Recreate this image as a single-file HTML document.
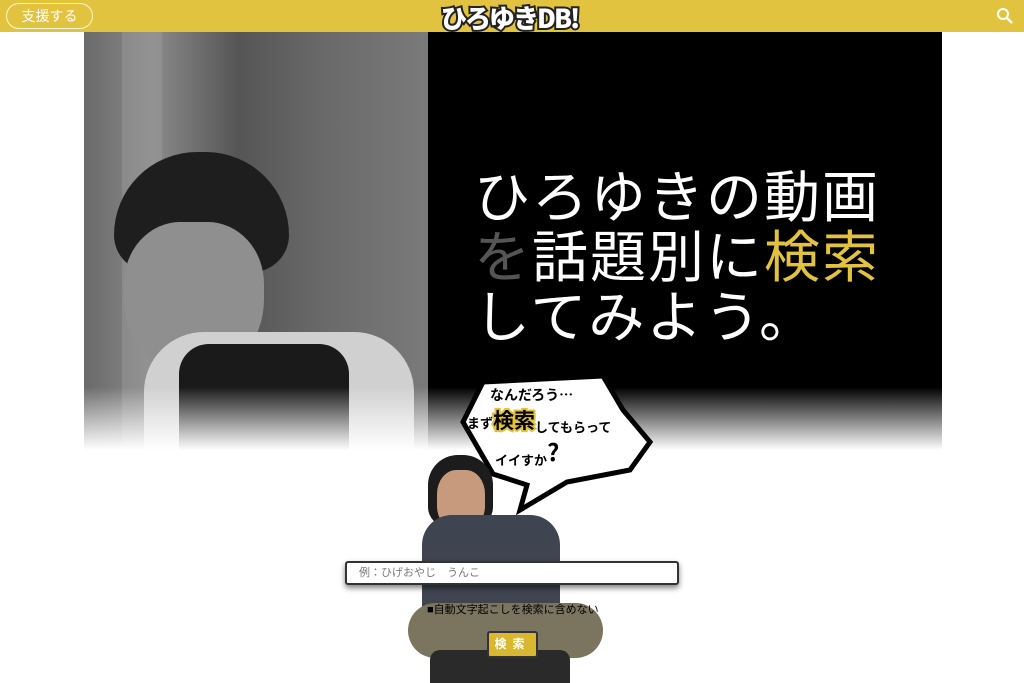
<!DOCTYPE html>
<html><head><meta charset="utf-8"><style>
*{margin:0;padding:0;box-sizing:border-box}
body{width:1024px;height:683px;overflow:hidden;background:#fff;font-family:"Liberation Sans","Noto Sans CJK JP",sans-serif;position:relative}
.hdr{position:absolute;left:0;top:0;width:1024px;height:32px;background:#e1c33f}
.sup{position:absolute;left:6px;top:3px;width:87px;height:26px;border:1px solid #fff5cc;border-radius:13px;color:#fff;font-size:14px;text-align:center;line-height:24px}
.logo{position:absolute;left:441px;top:-1px;font-size:26px;font-weight:900;color:#fff;-webkit-text-stroke:4px #222;paint-order:stroke;letter-spacing:-2px;font-family:"Noto Sans CJK JP",sans-serif}
.hero{position:absolute;left:84px;top:32px;width:858px;height:418px;overflow:hidden}
.lp{position:absolute;left:0;top:0;width:344px;height:418px;background:linear-gradient(90deg,#6a6a6a,#8a8a8a 20%,#555 45%,#6a6a6a 70%,#7a7a7a)}
.rp{position:absolute;left:344px;top:0;width:514px;height:418px;background:#000}
.fade{position:absolute;left:0;top:355px;width:858px;height:63px;background:linear-gradient(rgba(255,255,255,0),#fff)}
.h1{position:absolute;left:474px;top:164px;font-size:56px;line-height:60px;color:#fff;letter-spacing:2px;font-family:"Noto Sans CJK JP",sans-serif;font-weight:400}
.g{color:#555}.y{color:#e1c33f}
.bub{position:absolute;left:455px;top:370px}
.inp{position:absolute;left:345px;top:561px;width:334px;height:24px;background:#fff;border:2px solid #333;border-radius:3px;box-shadow:0 3px 6px rgba(0,0,0,.5);font-size:11px;color:#777;padding-left:12px;line-height:20px}
.chk{position:absolute;left:427px;top:601px;font-size:11px;color:#000}
.btn{position:absolute;left:487px;top:631px;width:51px;height:27px;background:#d9b731;border:2px solid #333;border-radius:3px;color:#fff;font-size:12px;font-weight:bold;text-align:center;line-height:23px;letter-spacing:6px}
</style></head><body>
<div class="hdr"><div class="sup">支援する</div><div class="logo">ひろゆきDB!</div>
<svg style="position:absolute;left:996px;top:7px" width="18" height="18"><circle cx="7" cy="7" r="5" stroke="#fff" stroke-width="2" fill="none"/><path d="M11 11L16 16" stroke="#fff" stroke-width="2.5"/></svg></div>
<div class="hero">
<div class="lp">
<div style="position:absolute;left:38px;top:0;width:40px;height:418px;background:rgba(160,160,160,.4)"></div>
<div style="position:absolute;left:30px;top:120px;width:175px;height:120px;background:#1e1e1e;border-radius:90px 90px 40px 40px"></div>
<div style="position:absolute;left:40px;top:190px;width:140px;height:155px;background:#8f8f8f;border-radius:40% 40% 50% 50%"></div>
<div style="position:absolute;left:60px;top:300px;width:270px;height:120px;background:#d0d0d0;border-radius:60px 60px 0 0"></div>
<div style="position:absolute;left:95px;top:312px;width:170px;height:110px;background:#1a1a1a;border-radius:30px 30px 0 0"></div>
</div>
<div class="rp"></div>
<div class="fade"></div>
</div>
<div class="h1">ひろゆきの動画<br><span class="g">を</span>話題別に<span class="y">検索</span><br>してみよう。</div>
<svg class="bub" width="200" height="145" viewBox="0 0 200 145"><path d="M28 12L148 6L168 40L195 72L175 100L112 112L65 140L72 115L38 104L8 52Z" fill="#fff" stroke="#000" stroke-width="5"/>
<text x="35" y="30" font-size="14" font-weight="bold" font-family="Noto Sans CJK JP,sans-serif">なんだろう…</text>
<text x="12" y="58" font-size="13" font-weight="bold" font-family="Noto Sans CJK JP,sans-serif">まず<tspan font-size="21" stroke="#e1c33f" stroke-width="4" paint-order="stroke">検索</tspan><tspan dy="4">してもらって</tspan></text>
<text x="40" y="95" font-size="13" font-weight="bold" font-family="Noto Sans CJK JP,sans-serif">イイすか<tspan font-size="24" dy="-4">?</tspan></text></svg>
<div style="position:absolute;left:428px;top:455px;width:65px;height:72px;background:#1c1c1c;border-radius:30px 30px 20px 20px"></div>
<div style="position:absolute;left:437px;top:470px;width:48px;height:60px;background:#c79a7e;border-radius:40%"></div>
<div style="position:absolute;left:422px;top:515px;width:138px;height:100px;background:#3e4450;border-radius:30px 30px 0 0"></div>
<div style="position:absolute;left:408px;top:603px;width:195px;height:55px;background:#7b7560;border-radius:30px"></div>
<div style="position:absolute;left:430px;top:650px;width:140px;height:33px;background:#2a2a2a;border-radius:10px 10px 0 0"></div>
<div class="inp">例：ひげおやじ　うんこ</div>
<div class="chk">■自動文字起こしを検索に含めない</div>
<div class="btn">検索</div>
</body></html>
